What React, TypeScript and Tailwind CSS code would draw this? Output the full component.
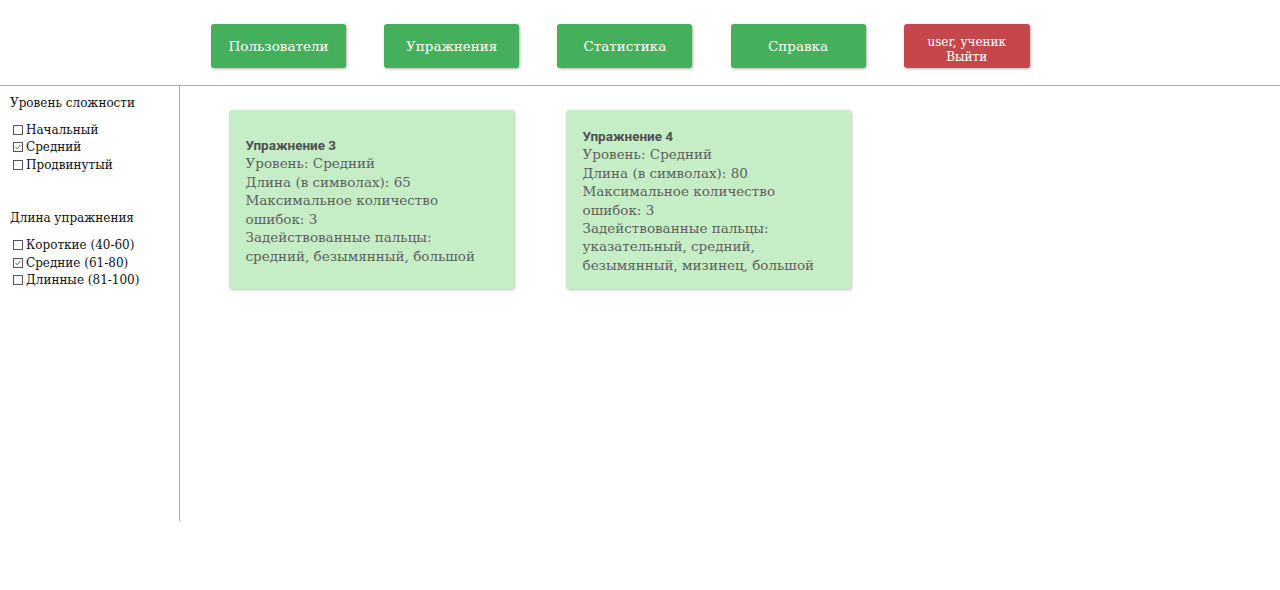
const slab = "font-['DejaVu_Serif',serif]";

const navItems = ["Пользователи", "Упражнения", "Статистика", "Справка"];

const levels = [
  { label: "Начальный", checked: false },
  { label: "Средний", checked: true },
  { label: "Продвинутый", checked: false },
];

const lengths = [
  { label: "Короткие (40-60)", checked: false },
  { label: "Средние (61-80)", checked: true },
  { label: "Длинные (81-100)", checked: false },
];

const exercises = [
  {
    title: "Упражнение 3",
    lines: [
      "Уровень: Средний",
      "Длина (в символах): 65",
      "Максимальное количество ошибок: 3",
      "Задействованные пальцы: средний, безымянный, большой",
    ],
  },
  {
    title: "Упражнение 4",
    lines: [
      "Уровень: Средний",
      "Длина (в символах): 80",
      "Максимальное количество ошибок: 3",
      "Задействованные пальцы: указательный, средний, безымянный, мизинец, большой",
    ],
  },
];

function Check({ checked, label }: { checked: boolean; label: string }) {
  return (
    <label className="flex items-center gap-[3px] h-[17.5px]">
      <span className="relative w-[10px] h-[10px] border border-[#555] bg-white shrink-0">
        {checked && (
          <svg viewBox="0 0 10 10" className="absolute inset-0 w-full h-full">
            <path d="M2 5 L4 7.2 L8 2.6" fill="none" stroke="#333" strokeWidth="1" />
          </svg>
        )}
      </span>
      <span>{label}</span>
    </label>
  );
}

export default function App() {
  return (
    <div className={`w-[1280px] h-[590px] bg-white ${slab}`}>
      <header className="h-[86px] border-b border-[#a9a9a9] flex items-start pt-[24px] pl-[211px] gap-[38.2px]">
        {navItems.map((n) => (
          <button
            key={n}
            className="w-[135px] h-[44px] rounded-[3px] bg-[#45b05b] text-white text-[13.5px] shadow-[1px_1px_3px_rgba(0,0,0,0.3)]"
          >
            {n}
          </button>
        ))}
        <button className="w-[126px] h-[44px] rounded-[3px] bg-[#c5474b] text-white text-[12px] leading-[15px] pt-[7px] shadow-[1px_1px_3px_rgba(0,0,0,0.3)]">
          user, ученик
          <br />
          Выйти
        </button>
      </header>

      <div className="flex">
        <aside className="w-[180px] h-[435px] border-r border-[#a9a9a9] pl-[10px] pt-[8px] text-[12px] text-[#111]">
          <div className="mb-[9px]">Уровень сложности</div>
          <div className="pl-[3px]">
            {levels.map((l) => (
              <Check key={l.label} {...l} />
            ))}
          </div>
          <div className="mt-[35px] mb-[10px]">Длина упражнения</div>
          <div className="pl-[3px]">
            {lengths.map((l) => (
              <Check key={l.label} {...l} />
            ))}
          </div>
        </aside>

        <main className="flex items-start gap-[52px] pl-[49px] pt-[24px]">
          {exercises.map((e) => (
            <div
              key={e.title}
              className="w-[285px] h-[179px] rounded-[3px] bg-[#c6eec6] shadow-[1px_1px_3px_rgba(0,0,0,0.25)] flex items-center pl-[16.5px] pr-[16px] pt-[2px] text-[13.5px] leading-[18.4px] text-[#5e5e5e]"
            >
              <div>
                <div className="font-['Roboto',sans-serif] font-bold text-[#4f4f4f]">{e.title}</div>
                {e.lines.map((l) => (
                  <div key={l}>{l}</div>
                ))}
              </div>
            </div>
          ))}
        </main>
      </div>
    </div>
  );
}
